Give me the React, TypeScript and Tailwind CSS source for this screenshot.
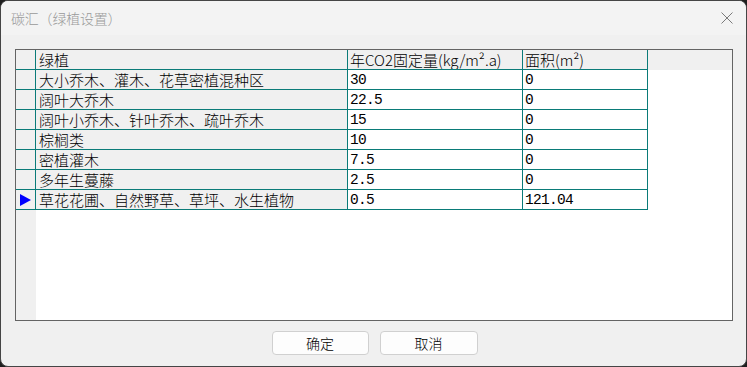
const ROWS = [
  { name: '大小乔木、灌木、花草密植混种区', rate: '30', area: '0' },
  { name: '阔叶大乔木', rate: '22.5', area: '0' },
  { name: '阔叶小乔木、针叶乔木、疏叶乔木', rate: '15', area: '0' },
  { name: '棕榈类', rate: '10', area: '0' },
  { name: '密植灌木', rate: '7.5', area: '0' },
  { name: '多年生蔓藤', rate: '2.5', area: '0' },
  { name: '草花花圃、自然野草、草坪、水生植物', rate: '0.5', area: '121.04', current: true },
]

const cell = 'h-[20px] border-b border-r border-[#0a7b78] leading-[19px] whitespace-nowrap overflow-hidden'
const num = "font-['Liberation_Mono',monospace] text-[14.5px] tracking-[-0.7px] leading-[20px]"

function Row({ name, rate, area, current }: { name: string; rate: string; area: string; current?: boolean }) {
  return (
    <div className="flex">
      <div className={`${cell} w-[20px] bg-[#f0f0f0] flex items-center pl-[4px]`}>
        {current && (
          <svg width="11" height="12" viewBox="0 0 11 12">
            <polygon points="0,0 11,6 0,12" fill="#0000ff" />
          </svg>
        )}
      </div>
      <div className={`${cell} w-[312px] bg-[#f0f0f0] pl-[3px]`}>{name}</div>
      <div className={`${cell} ${num} w-[175px] bg-white pl-[2px]`}>{rate}</div>
      <div className={`${cell} ${num} w-[125px] bg-white pl-[2px]`}>{area}</div>
    </div>
  )
}

export default function App() {
  return (
    <div className="w-[747px] h-[367px] bg-[#1e1e1e] font-['Noto_Sans_CJK_SC',sans-serif] font-light text-black">
      <div className="w-full h-full rounded-[8px] border border-[#454545] bg-[#f0f0f0] overflow-hidden flex flex-col">
        <div className="h-[34px] bg-[#f3f3f3] flex items-center justify-between pl-[10px] pr-[13px]">
          <span className="text-[14px] text-[#9a9a9a] tracking-[-0.2px]">碳汇（绿植设置）</span>
          <svg width="12" height="12" viewBox="0 0 12 12">
            <path d="M0.5 0.5 L11.5 11.5 M11.5 0.5 L0.5 11.5" stroke="#7a7a7a" strokeWidth="1" fill="none" />
          </svg>
        </div>

        <div className="flex-1 flex flex-col pl-[14px] pt-[14px]">
          <div className="w-[718px] h-[272px] border border-[#646464] bg-white flex flex-col text-[15px]">
            <div className="flex bg-[#f0f0f0]">
              <div className={`${cell} w-[20px]`} />
              <div className={`${cell} w-[312px] pl-[3px]`}>绿植</div>
              <div className={`${cell} w-[175px] pl-[2px]`}>年CO2固定量(kg/m².a)</div>
              <div className={`${cell} w-[125px] pl-[2px]`}>面积(m²)</div>
            </div>
            {ROWS.map((r) => (
              <Row key={r.name} {...r} />
            ))}
            <div className="flex-1 flex">
              <div className="w-[20px] bg-[#f0f0f0]" />
            </div>
          </div>

          <div className="flex justify-center gap-[11px] mt-[10px] w-[718px] pl-[1px]">
            <button className="w-[97px] h-[24px] rounded-[4px] border border-[#d0d0d0] bg-[#fdfdfd] text-[14px] leading-none">
              确定
            </button>
            <button className="w-[98px] h-[24px] rounded-[4px] border border-[#d0d0d0] bg-[#fdfdfd] text-[14px] leading-none">
              取消
            </button>
          </div>
        </div>
      </div>
    </div>
  )
}
